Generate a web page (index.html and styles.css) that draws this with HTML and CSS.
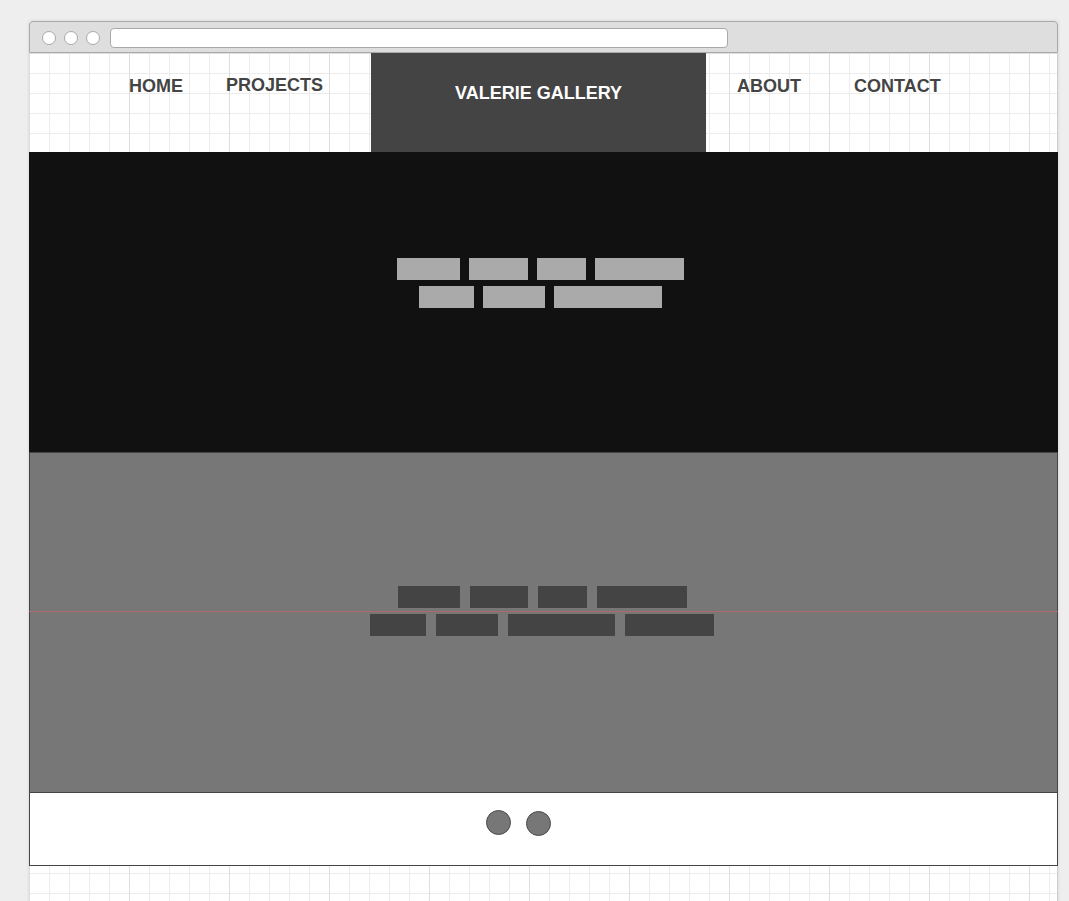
FILE: index.html
```html
<!DOCTYPE html>
<html lang="en">
<head>
<meta charset="utf-8">
<title>Valerie Gallery</title>
<link rel="stylesheet" href="styles.css">
</head>
<body>
<div class="window">
  <div class="titlebar">
    <span class="dot"></span>
    <span class="dot"></span>
    <span class="dot"></span>
    <span class="url"></span>
  </div>
  <div class="viewport">
    <nav class="nav">
      <a class="nav-item nav-home">HOME</a>
      <a class="nav-item nav-projects">PROJECTS</a>
      <div class="brand">VALERIE GALLERY</div>
      <a class="nav-item nav-about">ABOUT</a>
      <a class="nav-item nav-contact">CONTACT</a>
    </nav>
    <section class="hero">
      <div class="row">
        <span class="bar light" style="width:63px"></span>
        <span class="bar light" style="width:59px"></span>
        <span class="bar light" style="width:49px"></span>
        <span class="bar light" style="width:89px"></span>
      </div>
      <div class="row">
        <span class="bar light" style="width:55px"></span>
        <span class="bar light" style="width:62px"></span>
        <span class="bar light" style="width:108px"></span>
      </div>
    </section>
    <section class="feature">
      <div class="guide"></div>
      <div class="row">
        <span class="bar dark" style="width:62px"></span>
        <span class="bar dark" style="width:58px"></span>
        <span class="bar dark" style="width:49px"></span>
        <span class="bar dark" style="width:90px"></span>
      </div>
      <div class="row">
        <span class="bar dark" style="width:56px"></span>
        <span class="bar dark" style="width:62px"></span>
        <span class="bar dark" style="width:107px"></span>
        <span class="bar dark" style="width:89px"></span>
      </div>
    </section>
    <footer class="footer">
      <span class="circle"></span>
      <span class="circle circle-low"></span>
    </footer>
    <div class="spacer"></div>
  </div>
</div>
</body>
</html>
```

FILE: styles.css
```css
html, body {
  margin: 0;
  padding: 0;
  overflow: hidden;
}
body {
  background: #eeeeee;
  font-family: "Liberation Sans", Arial, sans-serif;
  height: 901px;
}
.window {
  margin: 21px 0 0 29px;
  width: 1029px;
  box-shadow: 0 0 3px rgba(0, 0, 0, 0.12);
}
.titlebar {
  box-sizing: border-box;
  height: 32px;
  background: #dedede;
  border: 1px solid #a9a9a9;
  border-radius: 4px 4px 0 0;
  display: flex;
  align-items: center;
  padding: 2px 0 0 12px;
}
.dot {
  box-sizing: border-box;
  width: 14px;
  height: 14px;
  border-radius: 50%;
  background: #ffffff;
  border: 1px solid #a9a9a9;
  margin-right: 8px;
}
.dot:nth-child(3) {
  margin-right: 10px;
}
.url {
  box-sizing: border-box;
  width: 618px;
  height: 20px;
  background: #ffffff;
  border: 1px solid #a9a9a9;
  border-radius: 4px;
}
.viewport {
  background-color: #ffffff;
  background-image:
    linear-gradient(to right, #dedede 1px, transparent 1px),
    linear-gradient(to bottom, #dedede 1px, transparent 1px),
    linear-gradient(to right, #ececec 1px, transparent 1px),
    linear-gradient(to bottom, #ececec 1px, transparent 1px);
  background-size: 100px 100px, 100px 100px, 20px 20px, 20px 20px;
  background-position: 0 0;
  border-right: 1px solid #cfcfcf;
  box-sizing: border-box;
  display: flex;
  flex-direction: column;
}
.nav {
  height: 99px;
  display: flex;
  align-items: flex-start;
}
.nav-item {
  font-size: 18px;
  font-weight: bold;
  color: #444444;
  line-height: 20px;
  padding-top: 23px;
  white-space: nowrap;
}
.nav-home { margin-left: 100px; }
.nav-projects { margin-left: 43px; padding-top: 22px; }
.nav-about { margin-left: 31px; }
.nav-contact { margin-left: 53px; }
.brand {
  margin-left: 48px;
  width: 335px;
  height: 99px;
  box-sizing: border-box;
  background: #444444;
  color: #ffffff;
  font-size: 18px;
  font-weight: bold;
  line-height: 20px;
  text-align: center;
  padding-top: 30px;
}
.hero {
  height: 300px;
  box-sizing: border-box;
  background: #111111;
  margin-right: -1px;
  padding: 106px 7px 0 0;
  display: flex;
  flex-direction: column;
  gap: 6px;
}
.row {
  display: flex;
  justify-content: center;
  gap: 9px;
}
.bar {
  display: block;
  height: 22px;
}
.bar.light { background: #aaaaaa; }
.bar.dark { background: #444444; }
.feature {
  position: relative;
  height: 340px;
  box-sizing: border-box;
  background: #777777;
  border: 1px solid #444444;
  border-bottom: none;
  margin-right: -1px;
  padding: 133px 3px 0 0;
  display: flex;
  flex-direction: column;
  gap: 6px;
}
.feature .row {
  gap: 10px;
}
.guide {
  position: absolute;
  left: -1px;
  right: -1px;
  top: 158px;
  height: 1px;
  background: #ad6a6a;
}
.footer {
  height: 74px;
  box-sizing: border-box;
  background: #ffffff;
  border: 1px solid #444444;
  margin-right: -1px;
  display: flex;
  justify-content: center;
  align-items: flex-start;
  gap: 15px;
  padding: 17px 50px 0 0;
}
.circle {
  box-sizing: border-box;
  width: 25px;
  height: 25px;
  border-radius: 50%;
  background: #777777;
  border: 1px solid #4a4a4a;
}
.circle-low {
  margin-top: 1px;
}
.spacer {
  height: 60px;
}
```
